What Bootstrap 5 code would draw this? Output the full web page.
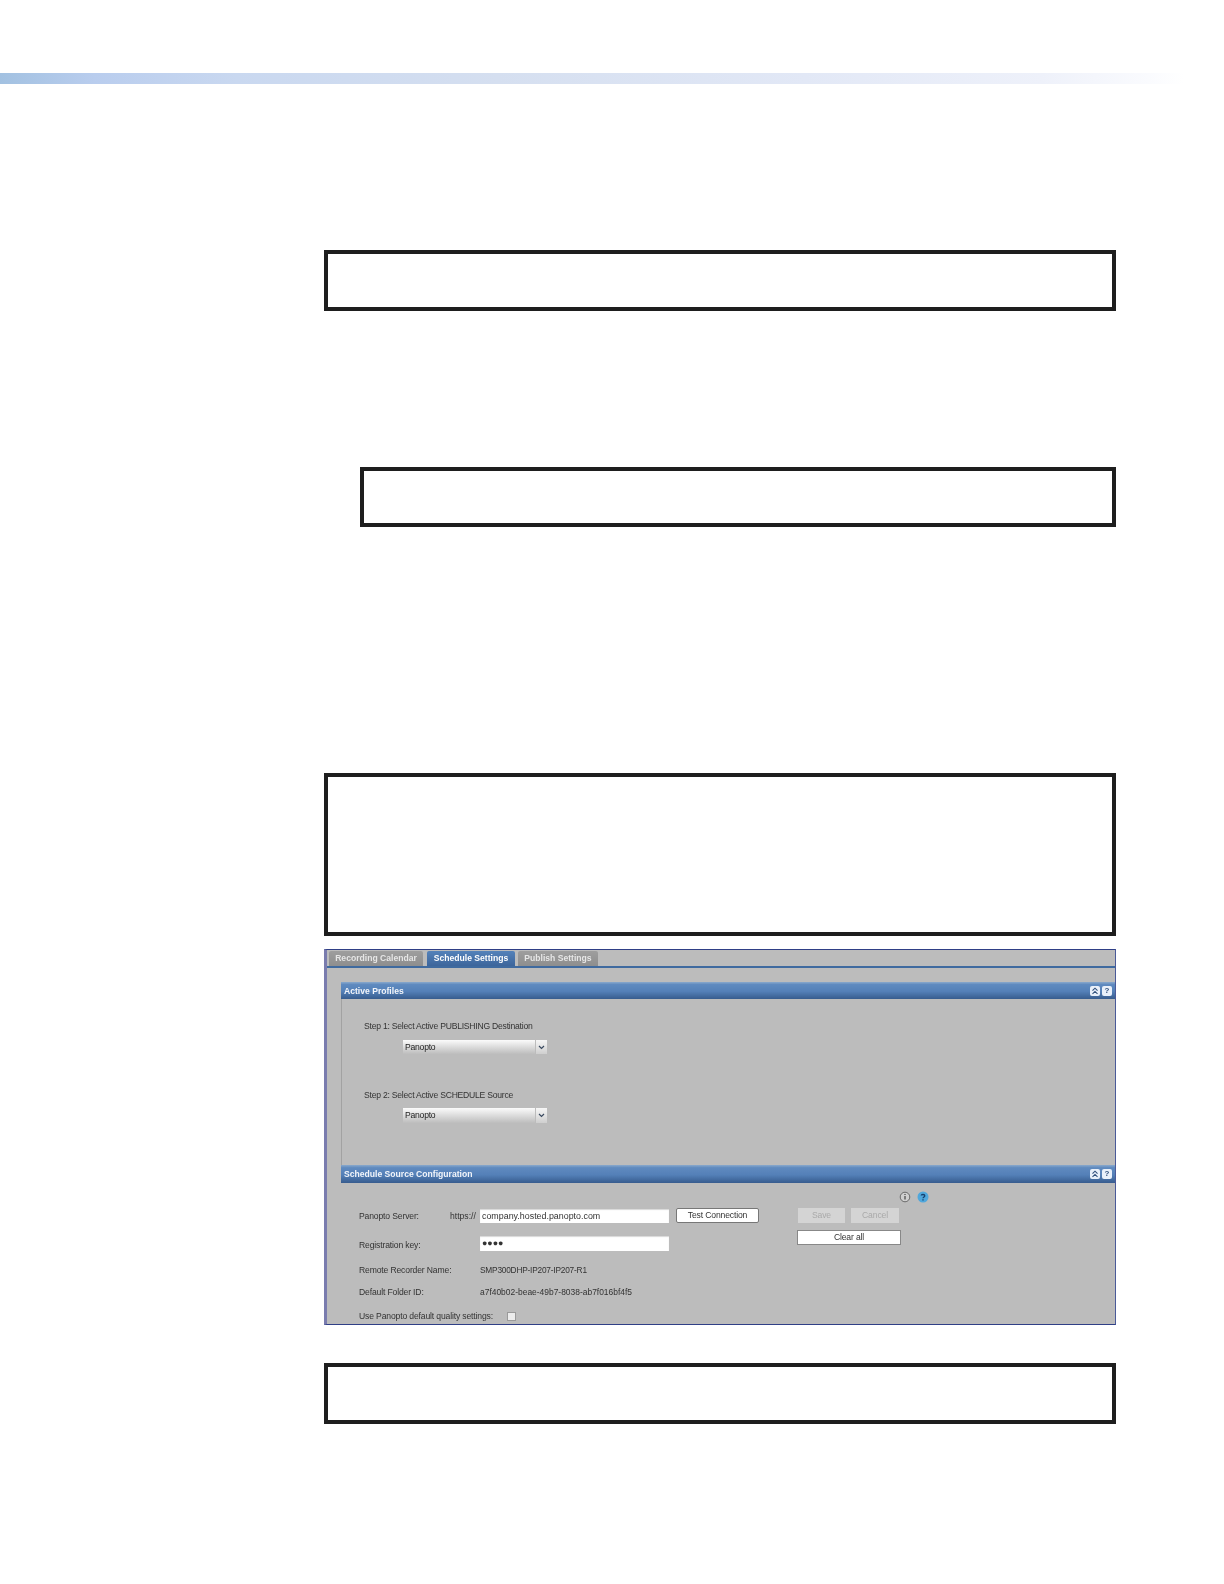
<!DOCTYPE html>
<html lang="en">
<head>
<meta charset="utf-8">
<title>Panopto settings</title>
<link href="https://cdn.jsdelivr.net/npm/bootstrap@5.3.0/dist/css/bootstrap.min.css" rel="stylesheet">
<style>
body{background:#fff;margin:0;font-family:"Liberation Sans",Arial,sans-serif;}
.top-band{margin-top:73px;height:11px;width:1184px;background:linear-gradient(90deg,#a2c1e1 0,#b9cdee 8%,#c9d8f0 20%,#d5dff0 42%,#e2e8f6 68%,#eef1fa 88%,#fafbfe 97%,#fff 100%);}
.doc-col{margin-left:324px;width:792px;}
.note-box{border:4px solid #1e1e1e;background:#fff;}
.nb1{height:61px;margin-top:166px;}
.nb2{height:60px;margin-top:156px;margin-left:36px;}
.nb3{height:163px;margin-top:246px;}
.nb4{height:61px;margin-top:38px;}
.shot{margin-top:13px;height:376px;background:#bcbcbc;border-top:1px solid #2f3f86;border-bottom:1px solid #2f3f86;border-right:1px solid #4a5a98;border-left:3px solid #7a7cae;font-size:8.6px;letter-spacing:-.15px;color:#333;line-height:12px;filter:blur(.35px);overflow:hidden;}
.tab-strip{height:18px;border-bottom:2px solid #3f6a9f;padding-left:2px;gap:4px;align-items:flex-end;letter-spacing:0;}
.tab-item{height:15px;line-height:15px;text-align:center;background:linear-gradient(#9e9e9e,#8e8e8e);color:#e6e6e6;font-weight:700;border-radius:2px 2px 0 0;}
.tab-rec{width:94px;}
.tab-sch{width:88px;background:linear-gradient(#5482ba,#3c659b);color:#fff;}
.tab-pub{width:80px;margin-left:-1px;}
.sect{margin-left:14px;margin-top:14px;}
.sect-head{height:17px;line-height:16px;padding:0 3px;background:linear-gradient(#8aa9cc 0,#5f8abf 15%,#5480b8 55%,#375c8e 100%);color:#f2f5fa;font-weight:700;letter-spacing:0;align-items:center;justify-content:space-between;}
.sect-two{height:18px;}
.head-btns{gap:2px;}
.head-btn{width:10px;height:10px;border-radius:2px;background:#e9f0fa;color:#30507c;display:flex;align-items:center;justify-content:center;font-size:8px;line-height:10px;}
.sect-a{height:166px;padding:21px 0 0 22px;border-left:1px solid #a2a2a2;letter-spacing:-.23px;}
.sel-box{width:144px;height:14px;margin:8px 0 35px 39px;}
.sel-low{margin-top:7px;height:15px;margin-bottom:0;}
.sel-val{flex:1;background:linear-gradient(#fbfbfb,#bdbdbd);color:#222;padding-left:2px;line-height:14px;}
.sel-arrow{width:11px;margin-left:1px;background:linear-gradient(#f6f6f6,#cfcfcf);align-items:center;justify-content:center;}
.sect-b{height:141px;}
.col-form{padding:25px 0 0 18px;width:457px;}
.col-btns{padding-top:8px;width:140px;}
.row-one{height:15px;align-items:center;}
.lab-a{width:91px;}
.lab-b{width:30px;white-space:nowrap;letter-spacing:0;}
.lab-c{width:121px;}
.lab-low{padding-top:2px;}
.txt-in{width:189px;height:14px;background:#fff;color:#333;padding-left:2px;line-height:14px;box-shadow:inset 0 1px 1px #d8d8d8;font-size:8.9px;letter-spacing:0;}
.txt-tall{height:15px;}
.val-id{font-size:8.3px;letter-spacing:-.2px;}
.val-folder{font-size:8.45px;letter-spacing:0;}
.btn-test{width:83px;height:15px;margin-left:7px;background:#fff;border:1px solid #777;border-radius:2px;text-align:center;line-height:13px;}
.gap-r2{margin-top:13px;}
.gap-r3{margin-top:13px;height:12px;}
.gap-r4{margin-top:10px;height:12px;}
.gap-r5{margin-top:12px;height:12px;}
.chk-box{width:9px;height:9px;background:#ececec;border:1px solid #9a9a9a;}
.lab-d{width:148px;white-space:nowrap;}
.icon-row{height:12px;margin-left:101px;gap:6px;margin-bottom:5px;}
.btn-off{height:15px;background:#d4d4d4;color:#a9a9a9;text-align:center;line-height:15px;}
.btn-save{width:47px;}
.btn-cancel{width:48px;margin-left:6px;}
.btn-clear{width:104px;height:15px;margin:7px 0 0 -1px;background:#fff;border:1px solid #888;text-align:center;line-height:13px;color:#333;}
.ic-svg{display:block;}
</style>
</head>
<body>
<div class="top-band"></div>
<main class="doc-col">
  <div class="note-box nb1"></div>
  <div class="note-box nb2"></div>
  <div class="note-box nb3"></div>

  <section class="shot">
    <div class="tab-strip d-flex">
      <div class="tab-item tab-rec">Recording Calendar</div>
      <div class="tab-item tab-sch">Schedule Settings</div>
      <div class="tab-item tab-pub">Publish Settings</div>
    </div>
    <div class="sect">
      <div class="sect-head d-flex">
        <span>Active Profiles</span>
        <span class="head-btns d-flex">
          <span class="head-btn"><svg class="ic-svg" width="8" height="8" viewBox="0 0 8 8" fill="none" stroke="#30507c" stroke-width="1.1"><path d="M1.5 3.600 4 1.200 6.500 3.600M1.500 6.800 4 4.400 6.500 6.800"/></svg></span>
          <span class="head-btn fw-bold">?</span>
        </span>
      </div>
      <div class="sect-a">
        <div>Step 1: Select Active PUBLISHING Destination</div>
        <div class="sel-box d-flex">
          <div class="sel-val">Panopto</div>
          <div class="sel-arrow d-flex"><svg width="7" height="5" viewBox="0 0 7 5" fill="none" stroke="#3a4a60" stroke-width="1.2"><path d="M1 1 3.500 3.500 6 1"/></svg></div>
        </div>
        <div>Step 2: Select Active SCHEDULE Source</div>
        <div class="sel-box sel-low d-flex">
          <div class="sel-val">Panopto</div>
          <div class="sel-arrow d-flex"><svg width="7" height="5" viewBox="0 0 7 5" fill="none" stroke="#3a4a60" stroke-width="1.2"><path d="M1 1 3.500 3.500 6 1"/></svg></div>
        </div>
      </div>
      <div class="sect-head sect-two d-flex">
        <span>Schedule Source Configuration</span>
        <span class="head-btns d-flex">
          <span class="head-btn"><svg class="ic-svg" width="8" height="8" viewBox="0 0 8 8" fill="none" stroke="#30507c" stroke-width="1.1"><path d="M1.5 3.600 4 1.200 6.500 3.600M1.500 6.800 4 4.400 6.500 6.800"/></svg></span>
          <span class="head-btn fw-bold">?</span>
        </span>
      </div>
      <div class="sect-b d-flex">
        <div class="col-form">
          <div class="row-one d-flex">
            <span class="lab-a">Panopto Server:</span>
            <span class="lab-b">https://</span>
            <div class="txt-in">company.hosted.panopto.com</div>
            <div class="btn-test">Test Connection</div>
          </div>
          <div class="row-one gap-r2 d-flex">
            <span class="lab-c lab-low">Registration key:</span>
            <div class="txt-in txt-tall fw-bold">&#9679;&#9679;&#9679;&#9679;</div>
          </div>
          <div class="row-one gap-r3 d-flex">
            <span class="lab-c">Remote Recorder Name:</span>
            <span class="val-id">SMP300DHP-IP207-IP207-R1</span>
          </div>
          <div class="row-one gap-r4 d-flex">
            <span class="lab-c">Default Folder ID:</span>
            <span class="val-folder">a7f40b02-beae-49b7-8038-ab7f016bf4f5</span>
          </div>
          <div class="row-one gap-r5 d-flex">
            <span class="lab-d">Use Panopto default quality settings:</span>
            <span class="chk-box"></span>
          </div>
        </div>
        <div class="col-btns">
          <div class="icon-row d-flex">
            <svg width="12" height="12" viewBox="0 0 12 12"><circle cx="6" cy="6" r="4.800" fill="#cfcfcf" stroke="#6a6a6a" stroke-width="1"/><path d="M6 3v1M6 5v3.500" stroke="#444" stroke-width="1.200"/></svg>
            <svg width="12" height="12" viewBox="0 0 12 12"><circle cx="6" cy="6" r="5.500" fill="#4fa7dc"/><path d="M4.200 4.500C4.300 3.200 7.800 3 7.800 4.800 7.800 6 6 6 6 7.300M6 8.200v1.300" fill="none" stroke="#16406e" stroke-width="1.300"/></svg>
          </div>
          <div class="d-flex">
            <div class="btn-off btn-save">Save</div>
            <div class="btn-off btn-cancel">Cancel</div>
          </div>
          <div class="btn-clear">Clear all</div>
        </div>
      </div>
    </div>
  </section>

  <div class="note-box nb4"></div>
</main>
<script src="https://cdn.jsdelivr.net/npm/bootstrap@5.3.0/dist/js/bootstrap.bundle.min.js"></script>
</body>
</html>
